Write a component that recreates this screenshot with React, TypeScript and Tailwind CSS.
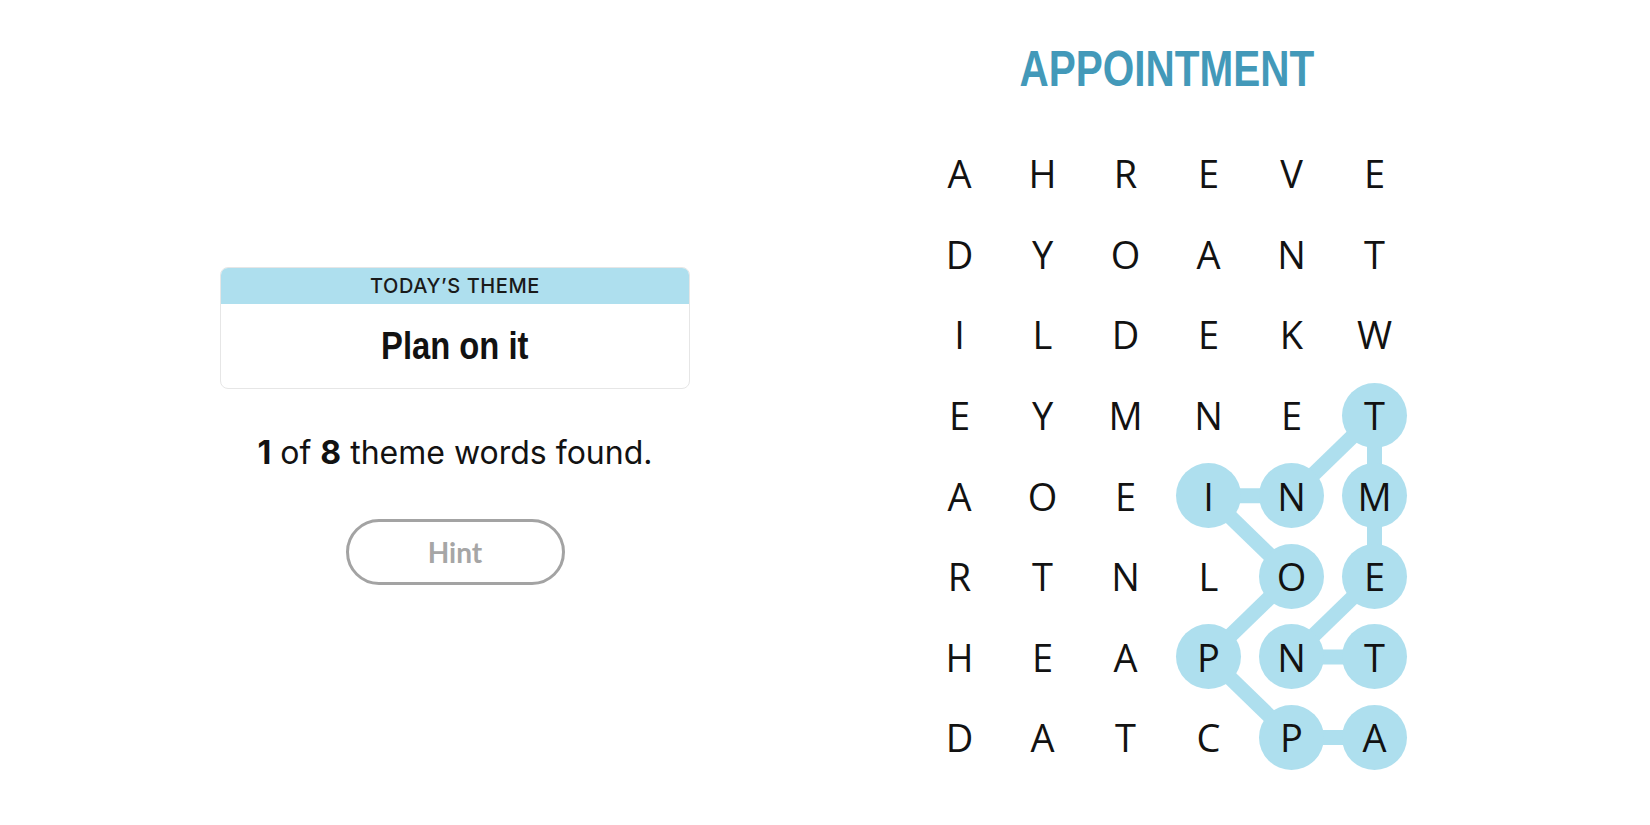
import React from 'react';

const GRID = [
  'AHREVE',
  'DYOANT',
  'ILDEKW',
  'EYMNET',
  'AOEINM',
  'RTNLOE',
  'HEAPNT',
  'DATCPA',
];

// found word path: APPOINTMENT, as [row, col]
const PATH: [number, number][] = [
  [7, 5], [7, 4], [6, 3], [5, 4], [4, 3], [4, 4], [3, 5], [4, 5], [5, 5], [6, 4], [6, 5],
];

const CELL_W = 83;
const CELL_H = 80.6;

const center = ([r, c]: [number, number]) => ({ x: c * CELL_W + CELL_W / 2, y: r * CELL_H + CELL_H / 2 });

function Board() {
  const found = new Set(PATH.map(([r, c]) => `${r}-${c}`));
  return (
    <div className="relative w-[498px] h-[645px]">
      {/* connectors behind the circles */}
      <svg className="absolute inset-0 pointer-events-none" width={498} height={645}>
        {PATH.slice(1).map((p, i) => {
          const a = center(PATH[i]);
          const b = center(p);
          return <line key={i} x1={a.x} y1={a.y} x2={b.x} y2={b.y} stroke="#aedfee" strokeWidth={15} />;
        })}
      </svg>
      <div className="relative grid grid-cols-[repeat(6,83px)] grid-rows-[repeat(8,80.6px)]">
        {GRID.map((row, r) =>
          row.split('').map((ch, c) => (
            <div key={`${r}-${c}`} className="flex items-center justify-center">
              <div
                className={`w-[65px] h-[65px] rounded-full flex items-center justify-center text-[38px] leading-none text-[#121212] ${
                  found.has(`${r}-${c}`) ? 'bg-[#aedfee]' : ''
                }`}
                style={{ fontFamily: '"Open Sans", sans-serif' }}
              >
                {ch}
              </div>
            </div>
          ))
        )}
      </div>
    </div>
  );
}

// condensed bold headline face (Franklin-ish): Arial metrics squeezed horizontally
const headline = { fontFamily: '"Liberation Sans", Arial, sans-serif' };

export default function App() {
  return (
    <div className="flex w-full h-[825px] bg-white text-[#121212]" style={{ fontFamily: 'Inter, "Liberation Sans", sans-serif' }}>
      {/* Left: theme + progress */}
      <div className="w-[910px] flex flex-col items-center pt-[267px]">
        <div className="w-[470px] rounded-lg border border-[#e6e6e6] overflow-hidden">
          <div className="h-[36px] bg-[#aedfee] flex items-center justify-center text-[20px] font-medium tracking-[0.03em] text-[#1a1a1a]">
            TODAY’S THEME
          </div>
          <div className="h-[84px] flex items-center justify-center">
            <span className="text-[39px] font-bold scale-x-[0.84]" style={headline}>
              Plan on it
            </span>
          </div>
        </div>
        <p className="mt-[44px] text-[32px] leading-[40px]">
          <b>1</b> of <b>8</b> theme words found.
        </p>
        <button className="mt-[46px] w-[219px] h-[66px] rounded-full border-[3px] border-[#a3a3a3] text-[28px] font-bold text-[#a6a6a6]" style={{ fontFamily: 'Lato, sans-serif' }}>
          Hint
        </button>
      </div>

      {/* Right: spangram + board */}
      <div className="ml-[8px] w-[498px] flex flex-col items-center">
        <h1 className="mt-[41px] text-[50px] leading-[56px] font-bold text-[#4399b9] scale-x-[0.81]" style={headline}>
          APPOINTMENT
        </h1>
        <div className="mt-[36px]">
          <Board />
        </div>
      </div>
    </div>
  );
}
